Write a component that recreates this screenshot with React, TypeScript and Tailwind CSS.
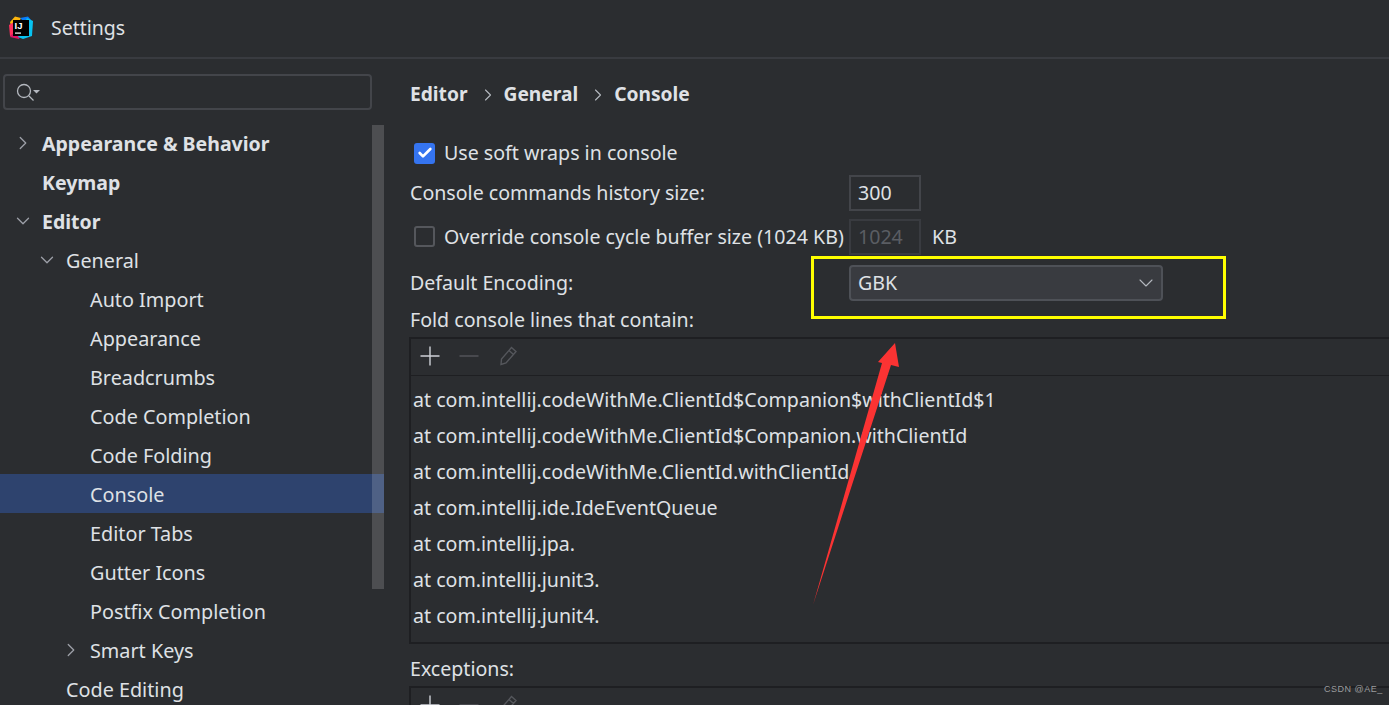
import { ChevronDown, ChevronRight, Check } from "lucide-react";

const font = "font-['Noto_Sans','Open_Sans',sans-serif]";

type TreeItem = { label: string; depth: 0 | 1 | 2; bold?: boolean; arrow?: "right" | "down"; selected?: boolean };

const tree: TreeItem[] = [
  { label: "Appearance & Behavior", depth: 0, bold: true, arrow: "right" },
  { label: "Keymap", depth: 0, bold: true },
  { label: "Editor", depth: 0, bold: true, arrow: "down" },
  { label: "General", depth: 1, arrow: "down" },
  { label: "Auto Import", depth: 2 },
  { label: "Appearance", depth: 2 },
  { label: "Breadcrumbs", depth: 2 },
  { label: "Code Completion", depth: 2 },
  { label: "Code Folding", depth: 2 },
  { label: "Console", depth: 2, selected: true },
  { label: "Editor Tabs", depth: 2 },
  { label: "Gutter Icons", depth: 2 },
  { label: "Postfix Completion", depth: 2 },
  { label: "Smart Keys", depth: 2, arrow: "right" },
  { label: "Code Editing", depth: 1 },
];

const lines = [
  "at com.intellij.codeWithMe.ClientId$Companion$withClientId$1",
  "at com.intellij.codeWithMe.ClientId$Companion.withClientId",
  "at com.intellij.codeWithMe.ClientId.withClientId",
  "at com.intellij.ide.IdeEventQueue",
  "at com.intellij.jpa.",
  "at com.intellij.junit3.",
  "at com.intellij.junit4.",
];

const Logo = () => (
  <svg width="24" height="24" viewBox="0 0 24 24" className="shrink-0">
    <path d="M1 6 L6 0.500 L12 2 L8 10 L2 10 Z" fill="#fdb60d" />
    <path d="M0 9 L5 6 L6 19 L1 20 Z" fill="#fe315d" />
    <path d="M3 18 L12 18 L10 23 L1 21 Z" fill="#dd1265" />
    <path d="M11 2 L19 0.500 L22 4 L20 10 Z" fill="#087cfa" />
    <path d="M18 2 L24 5 L23 20 L14 23 L9 21 Z" fill="#07c3f2" />
    <rect x="4" y="4" width="16" height="16" fill="#000" />
    <text x="5.500" y="12.500" fontSize="9.500" fontWeight="700" fill="#fff" fontFamily="Liberation Sans, sans-serif">
      IJ
    </text>
    <rect x="6" y="16.500" width="6" height="1.200" fill="#fff" />
  </svg>
);

const Arrow = ({ depth, dir }: { depth: number; dir: "right" | "down" }) => {
  const cls = "absolute top-1/2 -translate-y-1/2 text-[#9da0a8]";
  const left = depth === 0 ? "left-[12px]" : depth === 1 ? "left-[36px]" : "left-[60px]";
  return dir === "right" ? (
    <ChevronRight size={22} strokeWidth={1.4} className={`${cls} ${left}`} />
  ) : (
    <ChevronDown size={22} strokeWidth={1.4} className={`${cls} ${left}`} />
  );
};

const Sidebar = () => (
  <aside className="w-[384px] shrink-0 relative pt-[15px]">
    <div className="ml-[3px] w-[369px] h-9 border-2 border-[#43454a] rounded-[4px] flex items-center pl-[9px]">
      <svg width="26" height="22" viewBox="0 0 26 22" fill="none">
        <circle cx="10" cy="10" r="6.500" stroke="#b4b8bf" strokeWidth="1.300" />
        <path d="M15 15 L19.500 19.500" stroke="#b4b8bf" strokeWidth="1.300" />
        <path d="M19 9 H26 L22.500 12.500 Z" fill="#b4b8bf" />
      </svg>
    </div>
    <div className="mt-[13px]">
      {tree.map((t) => (
        <div
          key={t.label}
          className={`relative h-[39px] pt-[2px] flex items-center text-[#dfe1e5] ${
            t.selected ? "bg-[#2e436e]" : ""
          } ${t.bold ? "font-bold text-[19.5px]" : "text-[19.8px]"} ${
            t.depth === 0 ? "pl-[42px]" : t.depth === 1 ? "pl-[66px]" : "pl-[90px]"
          }`}
        >
          {t.arrow && <Arrow depth={t.depth} dir={t.arrow} />}
          {t.label}
        </div>
      ))}
    </div>
    <div className="absolute right-0 top-[66px] w-3 h-[464px] bg-white/[0.16]" />
  </aside>
);

const Toolbar = () => (
  <div className="h-[37px] pb-[2px] flex items-center gap-[19px] pl-[9px] border-b border-[#1e1f22]">
    <svg width="20" height="20" viewBox="0 0 20 20" stroke="#ced0d6" strokeWidth="1.400">
      <path d="M10 0.500 V19.500 M0.500 10 H19.500" />
    </svg>
    <svg width="20" height="20" viewBox="0 0 20 20" stroke="#55575c" strokeWidth="1.400">
      <path d="M0.500 10 H19.500" />
    </svg>
    <svg width="20" height="20" viewBox="0 0 20 20" fill="none" stroke="#55575c" strokeWidth="1.400">
      <path d="M13.500 1.500 L18 5.500 L8 17 L3 18.500 L3.500 13 Z M11 4.500 L15.500 8.500" />
    </svg>
  </div>
);

const Main = () => (
  <main className="flex-1 min-w-0 pl-[26px] text-[19.6px] text-[#dfe1e5]">
    <div className="h-[35px] mt-[18px] flex items-center font-bold text-[19.2px]">
      <span>Editor</span>
      <ChevronRight size={20} strokeWidth={1.3} className="ml-[10px] mr-[6px] text-[#b4b8bf]" />
      <span>General</span>
      <ChevronRight size={20} strokeWidth={1.3} className="ml-[10px] mr-[6px] text-[#b4b8bf]" />
      <span>Console</span>
    </div>

    <div className="mt-[23px] h-9 flex items-center pl-1">
      <span className="w-[21px] h-[21px] rounded-[3px] bg-[#3574f0] flex items-center justify-center">
        <Check size={16} strokeWidth={4} className="text-white" />
      </span>
      <span className="ml-[9px]">Use soft wraps in console</span>
    </div>

    <div className="mt-[4px] h-9 flex items-center">
      <span className="w-[439px] shrink-0">Console commands history size:</span>
      <div className="w-[72px] h-9 border-2 border-[#43454a] flex items-center pl-[7px]">300</div>
    </div>

    <div className="mt-2 h-9 flex items-center">
      <div className="w-[439px] shrink-0 flex items-center pl-1">
        <span className="w-[21px] h-[21px] rounded-[3px] border-2 border-[#55575c]" />
        <span className="ml-[9px] whitespace-nowrap">Override console cycle buffer size (1024 KB)</span>
      </div>
      <div className="w-[72px] h-9 border-2 border-[#393b40] flex items-center pl-[7px] text-[#5a5d63]">1024</div>
      <span className="ml-[11px]">KB</span>
    </div>

    <div className="mt-2.5 h-9 flex items-center">
      <span className="w-[439px] shrink-0">Default Encoding:</span>
      <div className="w-[314px] h-9 rounded-[4px] bg-[#393b40] border-2 border-[#4e5157] flex items-center justify-between pl-[7px] pr-[3px]">
        GBK
        <ChevronDown size={24} strokeWidth={1.1} className="text-[#b4b8bf]" />
      </div>
    </div>

    <div className="mt-[5px] h-7 flex items-center">Fold console lines that contain:</div>

    <div className="mt-[3px] -ml-px w-[1100px] h-[307px] border-2 border-[#1e1f22]">
      <Toolbar />
      <div className="pt-[6px] pl-[2px]">
        {lines.map((l) => (
          <div key={l} className="h-9 flex items-center whitespace-nowrap">
            {l}
          </div>
        ))}
      </div>
    </div>

    <div className="mt-[11px] h-7 flex items-center">Exceptions:</div>
    <div className="mt-[3px] -ml-px w-[1100px] h-[60px] border-2 border-[#1e1f22]">
      <Toolbar />
    </div>
  </main>
);

export default function App() {
  return (
    <div className={`relative w-[1389px] h-[705px] overflow-hidden bg-[#2b2d30] ${font}`}>
      <header className="h-[59px] border-b-2 border-[#393b40] flex items-center pl-[9px] pb-[1px]">
        <Logo />
        <span className="ml-[18px] text-[19.5px] text-[#dfe1e5]">Settings</span>
      </header>
      <div className="flex">
        <Sidebar />
        <Main />
      </div>
      {/* annotations */}
      <div className="absolute left-[811px] top-[256px] w-[415px] h-[63px] border-[3px] border-[#ffff00]" />
      <svg className="absolute left-0 top-0" width="1389" height="705" fill="#fb3333">
        <path d="M895 343 L899 367 L891 365 L813 605 L882 363 L878 362 Z" />
      </svg>
      <span className="absolute left-[1324px] top-[683px] text-[9px] tracking-[0.5px] text-[#9b9c9e] font-['Liberation_Sans',sans-serif]">
        CSDN @AE_
      </span>
    </div>
  );
}
